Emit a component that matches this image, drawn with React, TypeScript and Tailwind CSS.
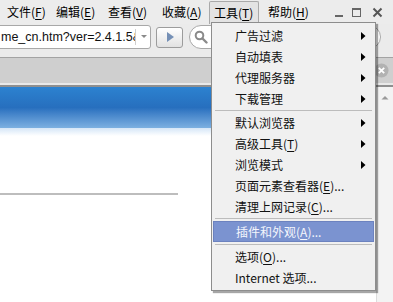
import React from 'react';

const topMenu = [
  { label: '文件', key: 'F', w: 'w-[49px]' },
  { label: '编辑', key: 'E', w: 'w-[52px]' },
  { label: '查看', key: 'V', w: 'w-[54px]' },
  { label: '收藏', key: 'A', w: 'w-[49px]' },
];

type Item =
  | { kind: 'item'; label: string; key?: string; tail?: string; arrow?: boolean; active?: boolean }
  | { kind: 'sep' };

const menuItems: Item[] = [
  { kind: 'item', label: '广告过滤', arrow: true },
  { kind: 'item', label: '自动填表', arrow: true },
  { kind: 'item', label: '代理服务器', arrow: true },
  { kind: 'item', label: '下载管理', arrow: true },
  { kind: 'sep' },
  { kind: 'item', label: '默认浏览器', arrow: true },
  { kind: 'item', label: '高级工具', key: 'T', arrow: true },
  { kind: 'item', label: '浏览模式', arrow: true },
  { kind: 'item', label: '页面元素查看器', key: 'E', tail: '...' },
  { kind: 'item', label: '清理上网记录', key: 'C', tail: '...' },
  { kind: 'sep' },
  { kind: 'item', label: '插件和外观', key: 'A', tail: '...', active: true },
  { kind: 'sep' },
  { kind: 'item', label: '选项', key: 'O', tail: '...' },
  { kind: 'item', label: 'Internet 选项...' },
];

function Accel({ k }: { k: string }) {
  return (
    <span>
      (<span className="underline underline-offset-2">{k}</span>)
    </span>
  );
}

export default function App() {
  return (
    <div
      className="relative w-[393px] h-[302px] overflow-hidden bg-white text-[12px] text-black"
      style={{ fontFamily: '"Noto Sans CJK SC", "Noto Sans", sans-serif' }}
    >
      {/* ── Menu bar ── */}
      <div className="h-[24px] bg-[#ececec] flex items-center pl-[5px]">
        {topMenu.map((m) => (
          <div key={m.key} className={`${m.w} h-[22px] flex items-center pl-[2px] leading-none`}>
            {m.label}
            <Accel k={m.key} />
          </div>
        ))}
        <div className="w-[50px] h-[23px] mt-[1px] flex items-center pl-[4px] leading-none border border-b-0 border-[#a9a9a9] rounded-t-[2px] bg-[#e3e3e3]">
          工具<Accel k="T" />
        </div>
        <div className="w-[60px] h-[22px] flex items-center pl-[9px] leading-none">
          帮助<Accel k="H" />
        </div>
        <div className="flex-1" />
        {/* window controls */}
        <div className="flex items-center gap-[5px] pr-[10px] text-[#555]">
          <div className="w-[8px] h-[2px] bg-[#666] mt-[7px]" />
          <div className="w-[9px] h-[9px] border border-[#666] border-t-2 ml-[4px]" />
          <svg width="11" height="11" viewBox="0 0 11 11" className="ml-[6px]">
            <path d="M1.5 1.5 L9.5 9.5 M9.5 1.5 L1.5 9.5" stroke="#555" strokeWidth="2" />
          </svg>
        </div>
      </div>

      {/* ── Address bar ── */}
      <div className="h-[26px] bg-[#ebebeb] flex items-center">
        <div className="w-[153px] h-[24px] ml-[-2px] bg-white border border-[#a8a8a8] rounded-r-[3px] flex items-center">
          <div
            className="w-[136px] overflow-hidden whitespace-nowrap text-[12.5px] text-[#111] pl-[2px]"
            style={{ fontFamily: '"Liberation Sans", Arial, sans-serif' }}
          >
            me_cn.htm?ver=2.4.1.5&amp;
          </div>
          <div className="h-[16px] w-px bg-[#cfcfcf]" />
          <svg width="12" height="6" viewBox="0 0 12 6" className="ml-[2px]">
            <path d="M3 1 L9 1 L6 4 Z" fill="#8a8a8a" />
          </svg>
        </div>
        <div className="w-[27px] h-[21px] ml-[5px] rounded-[3px] border border-[#9c9c9c] bg-gradient-to-b from-white to-[#e2e2e2] flex items-center justify-center">
          <svg width="10" height="12" viewBox="0 0 10 12">
            <path d="M2 1 L9 6 L2 11 Z" fill="#7590b6" />
          </svg>
        </div>
        <div className="w-[192px] h-[24px] ml-[6px] bg-white border border-[#a8a8a8] rounded-[12px] flex items-center pl-[4px]">
          <svg width="14" height="14" viewBox="0 0 14 14">
            <circle cx="5.5" cy="5.5" r="3.8" fill="none" stroke="#8a8a8a" strokeWidth="2" />
            <path d="M8.5 8.5 L12.5 12.5" stroke="#8a8a8a" strokeWidth="2.4" strokeLinecap="round" />
          </svg>
        </div>
      </div>

      {/* ── Strip under address bar ── */}
      <div className="h-[8px] bg-[#ebebeb] border-b border-[#a3a3a3]" />

      {/* ── Tab row ── */}
      <div className="h-[25px] bg-[#cfcfcf] flex items-center justify-end pr-[4px]">
        <svg width="15" height="15" viewBox="0 0 15 15">
          <circle cx="7.5" cy="7.5" r="7" fill="#b2b2b2" />
          <path d="M4.8 4.8 L10.2 10.2 M10.2 4.8 L4.8 10.2" stroke="#fff" strokeWidth="1.8" />
        </svg>
      </div>
      <div className="h-[2px] bg-[#e9e9e9]" />
      <div className="h-[2px] bg-[#8f8f8f]" />

      {/* ── Page area ── */}
      <div className="flex h-[215px]">
        <div className="flex-1 flex flex-col">
          <div className="h-[41px] bg-gradient-to-b from-[#2c82d0] via-[#276fbe] to-[#7cb0e1]" />
          <div className="h-[8px] bg-gradient-to-b from-[#d5e6f7] to-white" />
          <div className="h-[57px]" />
          <div className="w-[178px] h-[2px] bg-[#bdbdbd]" />
        </div>
        {/* scrollbar */}
        <div className="w-[17px] bg-[#f3f3f3] border-l border-[#dcdcdc] flex justify-center pt-[8px]">
          <svg width="8" height="5" viewBox="0 0 8 5">
            <path d="M0.5 4.5 L4 1 L7.5 4.5 Z" fill="#9a9a9a" />
          </svg>
        </div>
      </div>

      {/* ── Dropdown menu (overlay) ── */}
      <div className="absolute left-[211px] top-[22px] w-[165px] bg-[#f0f0f0] border border-[#8d8d8d] shadow-[2px_2px_1px_rgba(0,0,0,0.35)] pt-[2px] pb-[2px] px-px">
        {menuItems.map((it, i) =>
          it.kind === 'sep' ? (
            <div key={i} className="h-[3px] flex flex-col justify-center px-[2px]">
              <div className="h-px bg-[#bcbcbc]" />
            </div>
          ) : (
            <div
              key={i}
              className={`h-[21px] flex items-center pl-[22px] pr-[8px] leading-none ${
                it.active ? 'bg-[#7b93d0] border border-[#6c82bf] text-[#f4f6fc] my-[1px] h-[19px] pl-[21px]' : 'text-[#111]'
              }`}
            >
              <span className="flex-1 whitespace-nowrap">
                {it.label}
                {it.key && <Accel k={it.key} />}
                {it.tail}
              </span>
              {it.arrow && (
                <svg width="5" height="8" viewBox="0 0 5 8">
                  <path d="M0 0 L4.5 4 L0 8 Z" fill="#000" />
                </svg>
              )}
            </div>
          )
        )}
      </div>
    </div>
  );
}
